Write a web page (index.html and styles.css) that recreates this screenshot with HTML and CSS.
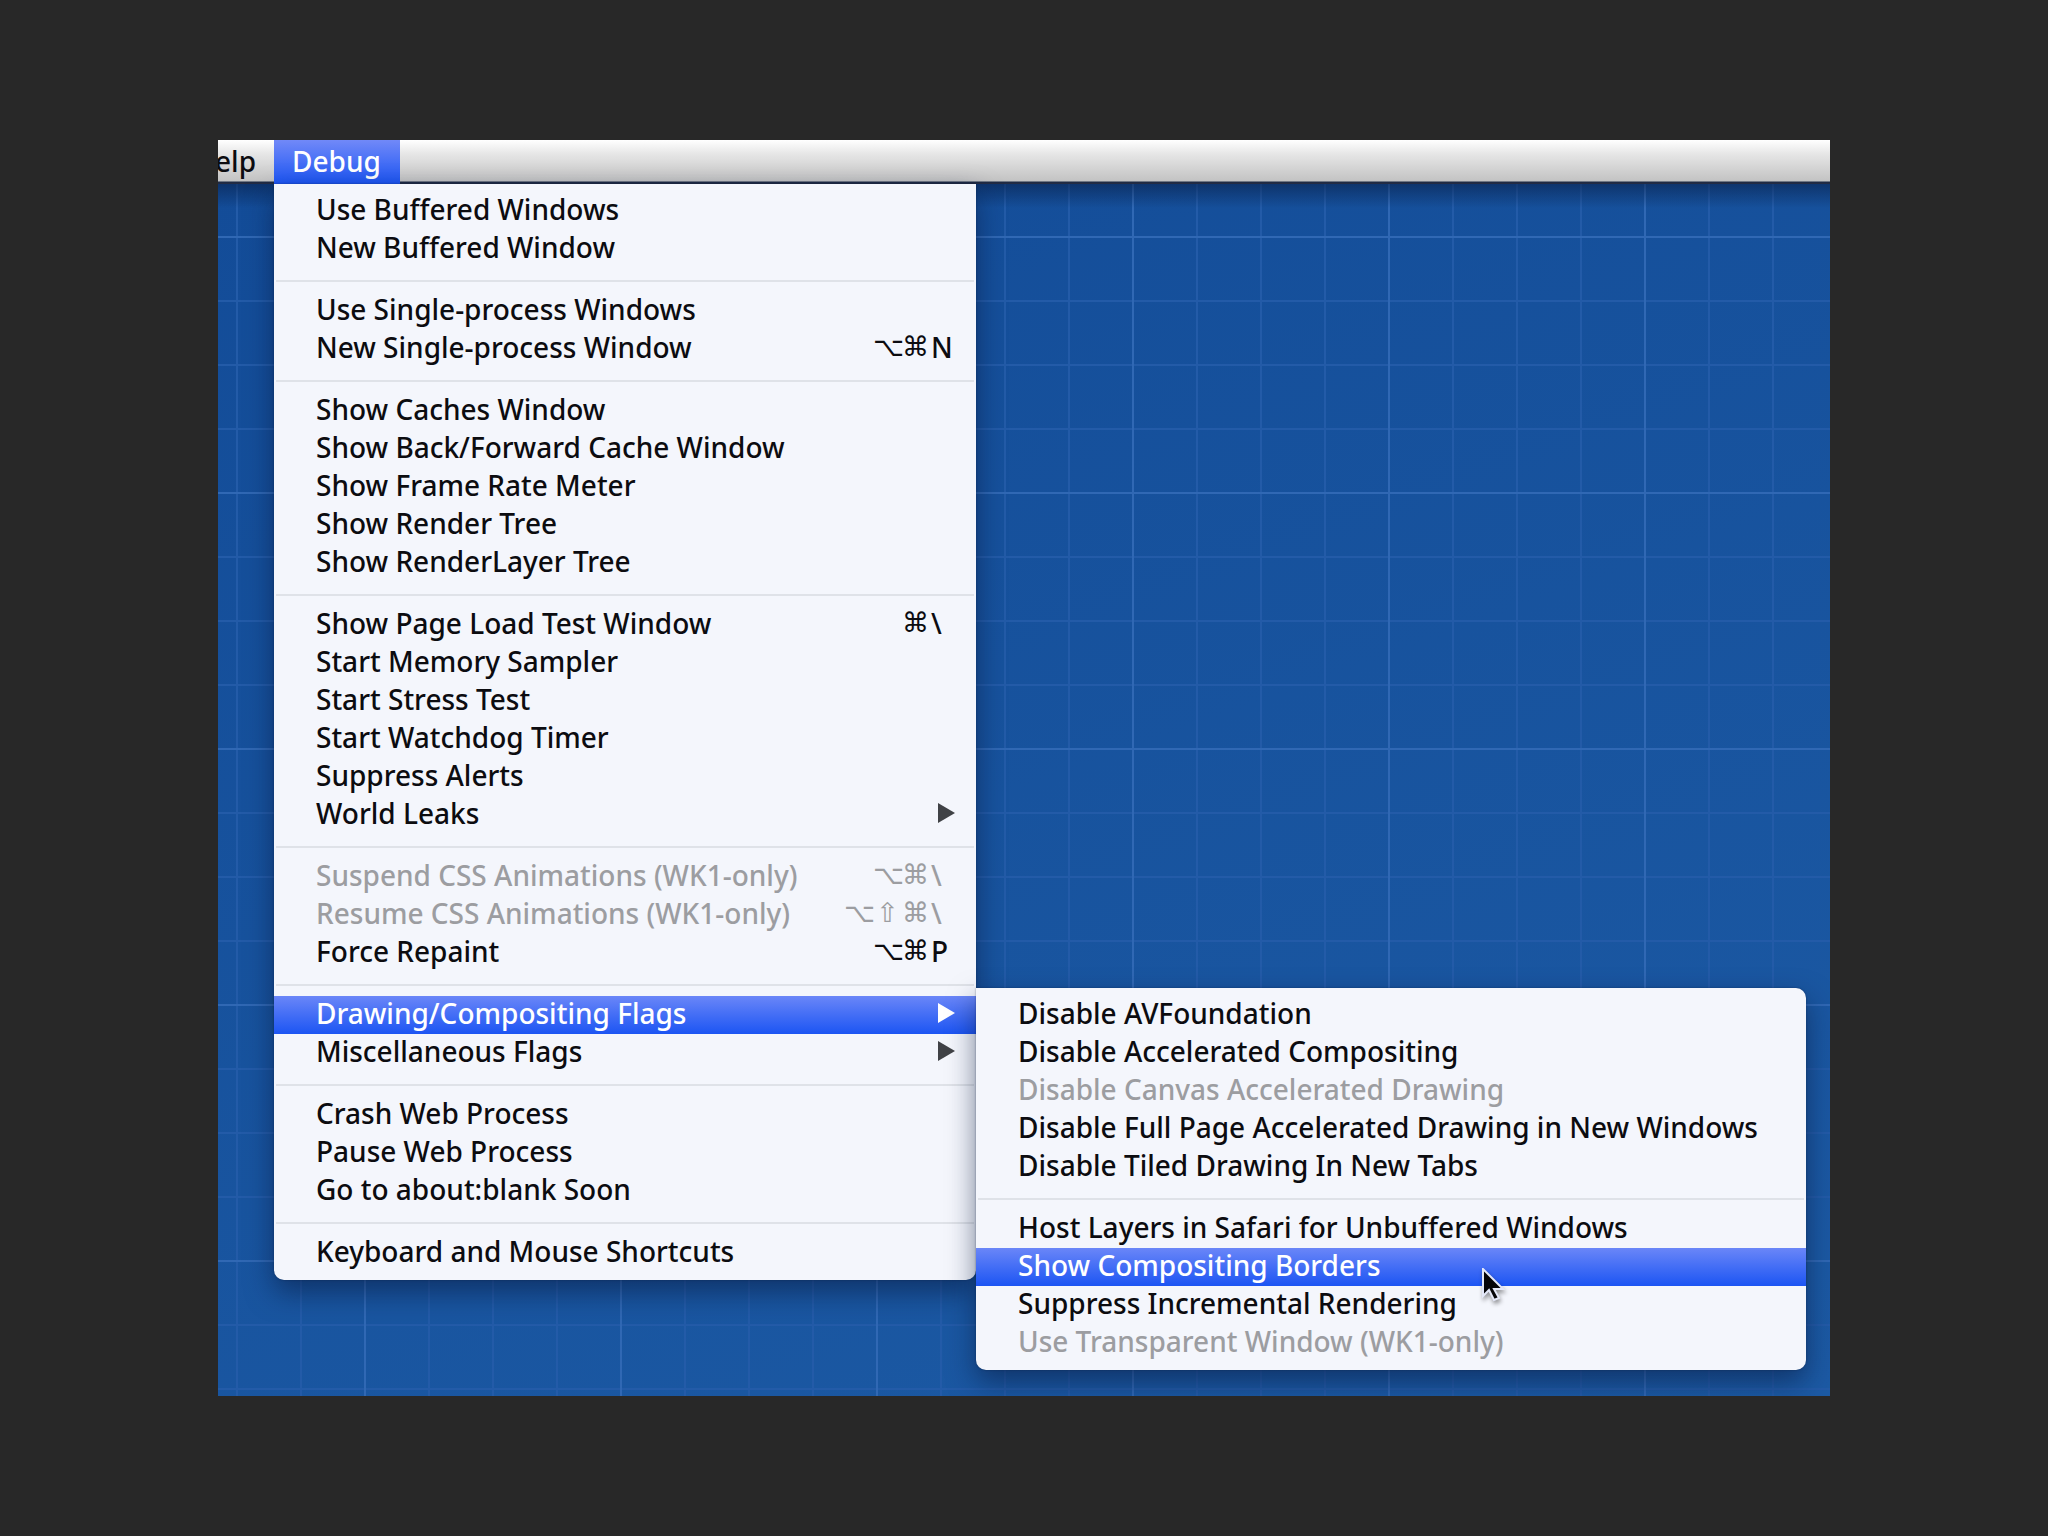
FILE: index.html
```html
<!DOCTYPE html>
<html lang="en">
<head>
<meta charset="utf-8">
<title>Debug menu</title>
<link rel="stylesheet" href="styles.css">
</head>
<body>
<main class="screen">
  <nav class="menubar">
    <button class="menubar-item clipped">Help</button>
    <button class="menubar-item active">Debug</button>
  </nav>
  <div class="desktop">
    <ul class="menu main-menu">
      <li><button class="item">Use Buffered Windows</button></li>
      <li><button class="item">New Buffered Window</button></li>
      <li class="separator"></li>
      <li><button class="item">Use Single-process Windows</button></li>
      <li><button class="item">New Single-process Window<span class="keys"><span class="mod">⌥</span><span class="mod">⌘</span><span class="key">N</span></span></button></li>
      <li class="separator"></li>
      <li><button class="item">Show Caches Window</button></li>
      <li><button class="item">Show Back/Forward Cache Window</button></li>
      <li><button class="item">Show Frame Rate Meter</button></li>
      <li><button class="item">Show Render Tree</button></li>
      <li><button class="item">Show RenderLayer Tree</button></li>
      <li class="separator"></li>
      <li><button class="item">Show Page Load Test Window<span class="keys"><span class="mod">⌘</span><span class="key">\</span></span></button></li>
      <li><button class="item">Start Memory Sampler</button></li>
      <li><button class="item">Start Stress Test</button></li>
      <li><button class="item">Start Watchdog Timer</button></li>
      <li><button class="item">Suppress Alerts</button></li>
      <li><button class="item">World Leaks<svg class="arrow" viewBox="0 0 17 20"><path d="M0 0L17 10L0 20Z"/></svg></button></li>
      <li class="separator"></li>
      <li><button class="item" disabled>Suspend CSS Animations (WK1-only)<span class="keys"><span class="mod">⌥</span><span class="mod">⌘</span><span class="key">\</span></span></button></li>
      <li><button class="item" disabled>Resume CSS Animations (WK1-only)<span class="keys"><span class="mod">⌥</span><span class="mod shift">⇧</span><span class="mod">⌘</span><span class="key">\</span></span></button></li>
      <li><button class="item">Force Repaint<span class="keys"><span class="mod">⌥</span><span class="mod">⌘</span><span class="key">P</span></span></button></li>
      <li class="separator"></li>
      <li class="parent">
        <button class="item selected">Drawing/Compositing Flags<svg class="arrow" viewBox="0 0 17 20"><path d="M0 0L17 10L0 20Z"/></svg></button>
        <ul class="menu submenu">
          <li><button class="item">Disable AVFoundation</button></li>
          <li><button class="item">Disable Accelerated Compositing</button></li>
          <li><button class="item" disabled>Disable Canvas Accelerated Drawing</button></li>
          <li><button class="item">Disable Full Page Accelerated Drawing in New Windows</button></li>
          <li><button class="item">Disable Tiled Drawing In New Tabs</button></li>
          <li class="separator"></li>
          <li><button class="item">Host Layers in Safari for Unbuffered Windows</button></li>
          <li class="parent">
            <button class="item selected">Show Compositing Borders</button>
            <svg class="pointer" viewBox="0 0 24 36"><path d="M1 1V28L7 22L12 32L17 30L12 21H21Z" fill="#050508" stroke="#e4e8f8" stroke-width="2"/></svg>
          </li>
          <li><button class="item">Suppress Incremental Rendering</button></li>
          <li><button class="item" disabled>Use Transparent Window (WK1-only)</button></li>
        </ul>
      </li>
      <li><button class="item">Miscellaneous Flags<svg class="arrow" viewBox="0 0 17 20"><path d="M0 0L17 10L0 20Z"/></svg></button></li>
      <li class="separator"></li>
      <li><button class="item">Crash Web Process</button></li>
      <li><button class="item">Pause Web Process</button></li>
      <li><button class="item">Go to about:blank Soon</button></li>
      <li class="separator"></li>
      <li><button class="item">Keyboard and Mouse Shortcuts</button></li>
    </ul>
  </div>
</main>
</body>
</html>
```
FILE: styles.css
```css
* {
  box-sizing: border-box;
}

body {
  margin: 0;
  min-height: 100vh;
  padding: 140px 218px;
  display: flex;
  background: #282828;
  font-family: "Noto Sans", "Open Sans", sans-serif;
  font-size: 28px;
  font-weight: 500;
  line-height: 34px;
  color: #0c0c10;
}

button {
  margin: 0;
  border: 0;
  background: none;
  font: inherit;
  color: inherit;
  text-align: left;
  white-space: nowrap;
}

.screen {
  flex: 1;
  display: flex;
  flex-direction: column;
  overflow: hidden;
}

.menubar {
  display: flex;
  height: 44px;
  background: linear-gradient(#ffffff 0, #e6e6e6 14px, #c3c3c3 41px, #1c2a44 42px, #262c44 44px);
}

.menubar-item {
  display: flex;
  align-items: center;
  padding: 0 18px 2px;
}

.menubar-item.clipped {
  width: 56px;
  justify-content: flex-end;
  overflow: hidden;
}

.menubar-item.active {
  width: 126px;
  color: #ffffff;
  background: linear-gradient(#7189f8, #1c55f3);
}

.desktop {
  flex: 1;
  padding: 0 56px 116px;
  background-color: #17529d;
  background-image:
    linear-gradient(rgba(8, 30, 70, 0.55), rgba(8, 30, 70, 0) 24px),
    linear-gradient(90deg, #3068b4 2px, transparent 2px),
    linear-gradient(#3068b4 2px, transparent 2px),
    linear-gradient(90deg, #235ba8 2px, transparent 2px),
    linear-gradient(#235ba8 2px, transparent 2px),
    linear-gradient(160deg, #134c98, #1c5aa4);
  background-size: auto, 256px 256px, 256px 256px, 64px 64px, 64px 64px, auto;
  background-position: 0 0, 146px 52px, 146px 52px, 18px 52px, 18px 52px, 0 0;
  background-repeat: no-repeat, repeat, repeat, repeat, repeat, no-repeat;
}

.menu {
  margin: 0;
  padding: 8px 0;
  list-style: none;
  background: #f4f6fc;
  box-shadow: 0 12px 28px rgba(8, 24, 60, 0.55), 0 0 2px rgba(8, 24, 60, 0.5);
}

.main-menu {
  width: 702px;
  border-radius: 0 0 10px 10px;
}

.submenu {
  position: absolute;
  z-index: 1;
  top: -8px;
  left: 100%;
  width: 830px;
  border-radius: 0 10px 10px 10px;
}

.parent {
  position: relative;
}

.item {
  display: flex;
  align-items: center;
  width: 100%;
  height: 38px;
  padding: 0 21px 4px 42px;
}

.item:disabled {
  color: #9c9da1;
}

.item.selected {
  color: #ffffff;
  background: linear-gradient(#6a86f8, #1c55f3);
}

.separator {
  height: 24px;
  padding: 12px 2px 10px;
}

.separator::before {
  content: "";
  display: block;
  height: 2px;
  background: #dfe2e8;
}

.keys {
  display: flex;
  margin-left: auto;
}

.mod {
  width: 29px;
  font-family: "DejaVu Sans", sans-serif;
  font-size: 27px;
}

.mod.shift {
  text-align: center;
}

.key {
  width: 24px;
}

.arrow {
  width: 17px;
  height: 20px;
  margin-left: auto;
  fill: #404246;
}

.selected .arrow {
  fill: #ffffff;
}

.pointer {
  position: absolute;
  top: 20px;
  left: 506px;
  width: 24px;
  height: 36px;
  filter: drop-shadow(1px 3px 2px rgba(0, 0, 0, 0.4));
}
```
